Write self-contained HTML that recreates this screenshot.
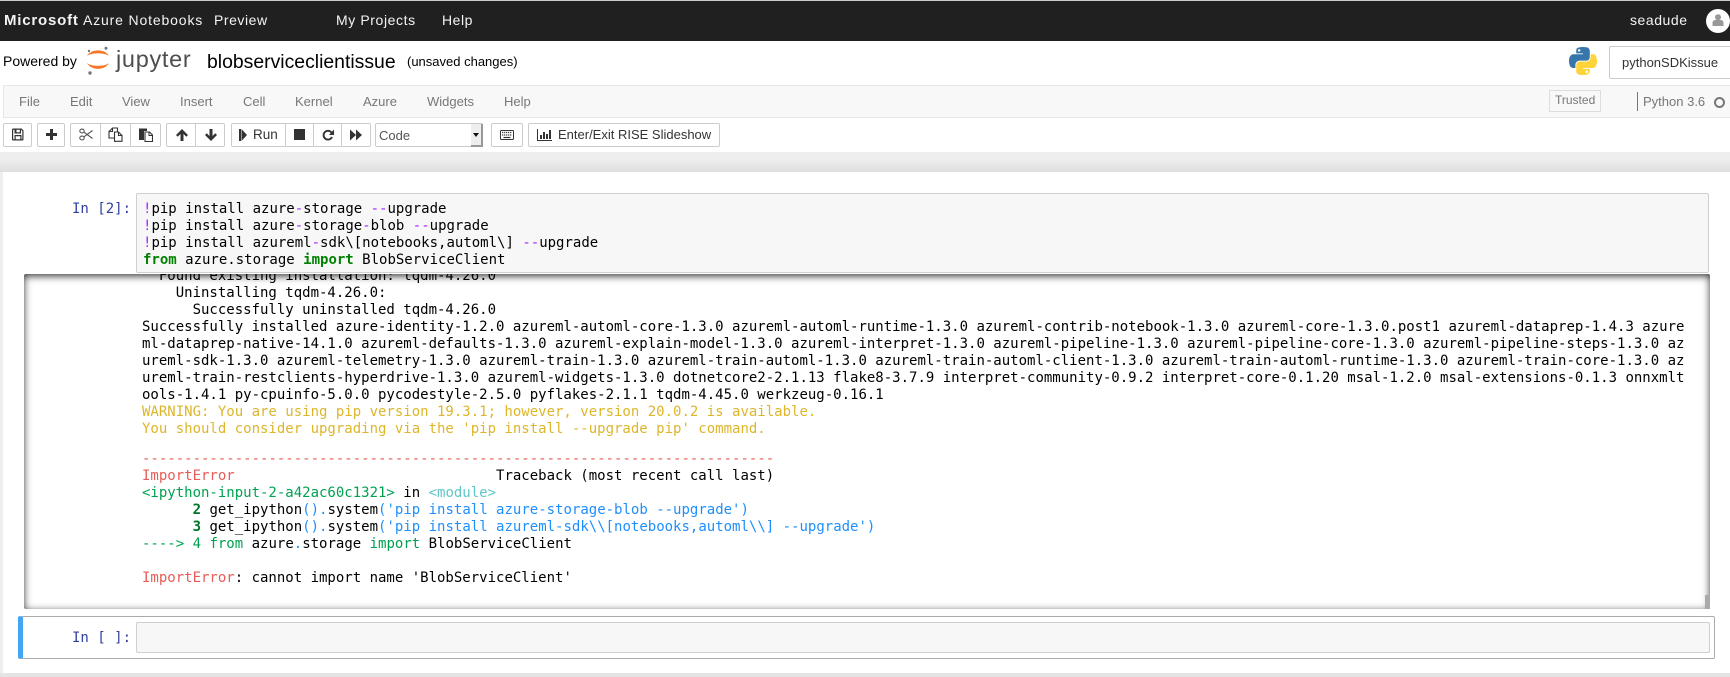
<!DOCTYPE html>
<html><head><meta charset="utf-8"><title>blobserviceclientissue</title>
<style>
html,body{margin:0;padding:0;width:1730px;height:677px;overflow:hidden;background:#fff}
body{position:relative;font-family:"Liberation Sans",sans-serif;color:#000}
.a,.t,.b,svg{position:absolute}
.t{white-space:pre;line-height:17px}
.top{color:#f4f4f4;font-size:14px;letter-spacing:.55px;top:12px}
.m{font-size:13px;color:#777;top:93px}
.b{top:123px;height:22px;background:#fff;border:1px solid #ccc;border-radius:2px;box-sizing:content-box}
.s{position:absolute;top:123px;height:24px;width:1px;background:#ccc}
.i{fill:#333}
pre{margin:0;position:absolute;font-family:"DejaVu Sans Mono","Liberation Mono",monospace;font-size:14px;line-height:17px;color:#000}
.p{color:#a2f}.k{color:green;font-weight:bold}
.y{color:#ddb62b}.r{color:#e75c58}.g{color:#00a250}.c{color:#60c6c8}.bl{color:#208ffb}.d{color:#007427;font-weight:bold}
</style></head><body>

<!-- top bar -->
<div class="a" style="left:0;top:0;width:1730px;height:1px;background:#ccc"></div>
<div class="a" style="left:0;top:1px;width:1730px;height:40px;background:#202020"></div>
<div class="t top" style="left:4px;font-size:15px;letter-spacing:.8px;font-weight:bold">Microsoft</div>
<div class="t top" style="left:83px;letter-spacing:.85px">Azure Notebooks</div>
<div class="t top" style="left:214px">Preview</div>
<div class="t top" style="left:336px;letter-spacing:.6px">My Projects</div>
<div class="t top" style="left:442px">Help</div>
<div class="t top" style="left:1630px">seadude</div>
<div class="a" style="left:1706px;top:9px;width:24px;height:24px;border-radius:12px;background:#fff"></div>
<svg style="left:1712px;top:14px" width="12" height="12" viewBox="0 0 12 12"><circle cx="6" cy="3.200" r="3" fill="#999"/><path d="M.5 12V9c0-2 1.300-3 3-3h5c1.700 0 3 1 3 3v3z" fill="#999"/></svg>

<!-- header -->
<div class="t" style="left:3px;top:53px;font-size:14px">Powered by</div>
<svg style="left:85px;top:45px" width="26" height="32" viewBox="0 0 26 32">
<path d="M2 11C6 3.500 20 3.500 24 11C20 7.500 6 7.500 2 11z" fill="#f37726"/>
<path d="M2 18C6 25.800 20 25.800 24 18C20 21.800 6 21.800 2 18z" fill="#f37726"/>
<circle cx="21" cy="3.300" r="1.500" fill="#767677"/><circle cx="4" cy="6" r="1.200" fill="#767677"/><circle cx="5" cy="28" r="1.700" fill="#767677"/></svg>
<div class="t" style="left:116px;top:46px;font-size:23.500px;line-height:27px;color:#4e4e4e;letter-spacing:.7px">jupyter</div>
<div class="t" style="left:207px;top:50px;font-size:19.400px;line-height:24px">blobserviceclientissue</div>
<div class="t" style="left:407px;top:53px;font-size:13px">(unsaved changes)</div>
<svg style="left:1569px;top:47px" width="28" height="28" viewBox="0 0 111 111">
<path fill="#3776ab" d="M54.919.001c-4.584.022-8.961.413-12.813 1.095C30.760 3.099 28.700 7.295 28.700 15.032v10.219h26.813v3.406H18.638c-7.793 0-14.616 4.684-16.750 13.594-2.462 10.213-2.571 16.586 0 27.250 1.906 7.938 6.457 13.594 14.250 13.594h9.219v-12.250c0-8.850 7.657-16.656 16.750-16.656h26.781c7.454 0 13.406-6.138 13.406-13.625V15.032c0-7.266-6.130-12.725-13.406-13.937C64.282.328 59.502-.020 54.919.001zM40.419 8.219c2.770 0 5.031 2.299 5.031 5.125 0 2.816-2.262 5.094-5.031 5.094-2.780 0-5.031-2.277-5.031-5.094 0-2.826 2.252-5.125 5.031-5.125z"/>
<path fill="#ffd43b" d="M85.638 28.657v11.906c0 9.231-7.826 17-16.750 17H42.106c-7.336 0-13.406 6.278-13.406 13.625v25.531c0 7.266 6.319 11.540 13.406 13.625 8.487 2.496 16.626 2.947 26.781 0 6.750-1.954 13.406-5.888 13.406-13.625V86.501H55.513v-3.406h40.188c7.793 0 10.696-5.436 13.406-13.594 2.800-8.399 2.680-16.476 0-27.250-1.926-7.757-5.604-13.594-13.406-13.594zM70.575 93.313c2.780 0 5.031 2.277 5.031 5.094 0 2.826-2.252 5.125-5.031 5.125-2.770 0-5.031-2.299-5.031-5.125 0-2.816 2.262-5.094 5.031-5.094z"/></svg>
<div class="a" style="left:1609px;top:46px;width:140px;height:31px;border:1px solid #ccc;border-radius:2px"></div>
<div class="t" style="left:1622px;top:54px;font-size:13px;color:#333">pythonSDKissue</div>

<!-- menu -->
<div class="a" style="left:3px;top:85px;width:1727px;height:31px;background:#f8f8f8;border-top:1px solid #e7e7e7;border-bottom:1px solid #e7e7e7;border-left:1px solid #e7e7e7;box-sizing:content-box"></div>
<div class="t m" style="left:19px">File</div>
<div class="t m" style="left:70px">Edit</div>
<div class="t m" style="left:122px">View</div>
<div class="t m" style="left:180px">Insert</div>
<div class="t m" style="left:243px">Cell</div>
<div class="t m" style="left:295px">Kernel</div>
<div class="t m" style="left:363px">Azure</div>
<div class="t m" style="left:427px">Widgets</div>
<div class="t m" style="left:504px">Help</div>
<div class="a" style="left:1549px;top:90px;width:50px;height:20px;border:1px solid #ddd"></div>
<div class="t" style="left:1555px;top:92px;font-size:12px;color:#777">Trusted</div>
<div class="a" style="left:1637px;top:92px;width:1px;height:19px;background:#777"></div>
<div class="t" style="left:1643px;top:93px;font-size:13px;color:#777">Python 3.6</div>
<div class="a" style="left:1714px;top:97px;width:7px;height:7px;border:2px solid #777;border-radius:50%"></div>

<!-- toolbar -->
<div class="b" style="left:3px;width:27px"></div>
<div class="b" style="left:37px;width:26px"></div>
<div class="b" style="left:70px;width:89px"></div><div class="s" style="left:100px"></div><div class="s" style="left:130px"></div>
<div class="b" style="left:166px;width:57px"></div><div class="s" style="left:195px"></div>
<div class="b" style="left:231px;width:138px"></div><div class="s" style="left:285px"></div><div class="s" style="left:313px"></div><div class="s" style="left:341px"></div>
<div class="b" style="left:375px;width:106px"></div>
<div class="a" style="left:471px;top:124px;width:10px;height:21px;background:#eee;border-right:2px solid #999;border-bottom:2px solid #999"></div>
<svg style="left:472px;top:132px" width="9" height="6"><path d="M1 1h6L4 5z" fill="#111"/></svg>
<div class="t" style="left:379px;top:127px;font-size:13px;color:#555">Code</div>
<div class="b" style="left:491px;width:30px"></div>
<div class="b" style="left:528px;width:190px"></div>

<!-- save -->
<svg style="left:12px;top:128px" width="12" height="13" viewBox="0 0 12 13"><path class="i" fill-rule="evenodd" d="M1 .5h8.500L11.500 2.500V11.500a1 1 0 0 1-1 1H1a1 1 0 0 1-1-1V1.500a1 1 0 0 1 1-1zM1.200 1.700V11.300H2.500V7h7v4.300h.800V3L9 1.700V5.500H2.500V1.700zM3.700 8.200V11.300H8.300V8.200zM4.500 1.700V4.300H7.800V1.700z"/></svg>
<!-- plus -->
<svg style="left:46px;top:129px" width="11" height="11" viewBox="0 0 11 11"><path class="i" d="M4 0h3v4h4v3H7v4H4V7H0V4h4z"/></svg>
<!-- scissors -->
<svg style="left:79px;top:128px" width="14" height="13" viewBox="0 0 14 13"><g fill="none" stroke="#555" stroke-width="1.100"><ellipse cx="3" cy="3" rx="2.200" ry="1.900"/><ellipse cx="3" cy="10" rx="2.200" ry="1.900"/><path d="M5 4.200L13.500 10.500M5 8.800L13.500 2.500"/></g></svg>
<!-- copy -->
<svg style="left:108px;top:127px" width="15" height="15" viewBox="0 0 15 15"><g fill="#fff" stroke="#333" stroke-width="1.100"><path d="M1 4.500L4.500 1H9.500V11H1z"/><path d="M6.500 5H10.500L14 8.500V14.300H6.500z"/><path d="M4.500 1V4.500H1M10.500 5V8.500H14" fill="none"/></g></svg>
<!-- paste -->
<svg style="left:139px;top:127px" width="14" height="15" viewBox="0 0 14 15"><path class="i" d="M0 1.500h8V4H5v9H0z"/><path d="M6 5h4.500L13.500 8v6.500H6z" fill="#fff" stroke="#333" stroke-width="1.100"/><path d="M10 5v3.500h3.500" fill="none" stroke="#333"/></svg>
<!-- up -->
<svg style="left:176px;top:129px" width="12" height="12" viewBox="0 0 12 12"><path class="i" d="M6 0L12 6 10.300 7.700 7.500 5v7h-3V5L1.700 7.700 0 6z"/></svg>
<!-- down -->
<svg style="left:205px;top:129px" width="12" height="12" viewBox="0 0 12 12"><path class="i" d="M6 12L0 6 1.700 4.300 4.500 7V0h3v7l2.800-2.700L12 6z"/></svg>
<!-- step forward -->
<svg style="left:239px;top:129px" width="8" height="12" viewBox="0 0 8 12"><path class="i" d="M0 0h2v12H0zM2.500 0L8 6l-5.500 6z"/></svg>
<div class="t" style="left:253px;top:126px;font-size:13.500px;color:#333">Run</div>
<!-- stop -->
<svg style="left:294px;top:129px" width="11" height="11"><rect width="11" height="11" fill="#333"/></svg>
<!-- repeat -->
<svg style="left:322px;top:129px" width="12" height="12" viewBox="0 0 12 12"><path d="M9.500 3.500A4.400 4.400 0 1 0 10 8" fill="none" stroke="#333" stroke-width="1.900"/><path class="i" d="M12 .5V6H7z"/></svg>
<!-- fast forward -->
<svg style="left:350px;top:129px" width="12" height="12" viewBox="0 0 12 12"><path class="i" d="M0 .5L6 6 0 11.500zM6 .5L12 6l-6 5.500z"/></svg>
<!-- keyboard -->
<svg style="left:500px;top:130px" width="14" height="10" viewBox="0 0 14 10"><rect x=".5" y=".5" width="13" height="9" rx="1" fill="#fff" stroke="#333"/><path d="M2 2.500h10M2 5h10" stroke="#444" stroke-width="1.300" stroke-dasharray="1.300 .7"/><path d="M3.500 7.500h7" stroke="#333" stroke-width="1.200"/></svg>
<!-- chart -->
<svg style="left:537px;top:129px" width="15" height="12" viewBox="0 0 15 12"><path class="i" d="M0 0h1v11h14v1H0zM3 6h2v4H3zM6 3h2v7H6zM9 5h2v5H9zM12 1h2v9h-2z"/></svg>
<div class="t" style="left:558px;top:126px;font-size:13px;color:#333">Enter/Exit RISE Slideshow</div>

<!-- band + notebook -->
<div class="a" style="left:0;top:152px;width:1730px;height:20px;background:linear-gradient(#eee 40%,#dedede)"></div>
<div class="a" style="left:0;top:172px;width:3px;height:505px;background:#eee"></div>
<div class="a" style="left:0;top:673px;width:1730px;height:4px;background:#e4e4e4"></div>

<pre style="left:72px;top:201px;color:#303f9f">In [2]:</pre>
<div class="a" style="left:136px;top:193px;width:1573px;height:80px;box-sizing:border-box;background:#f7f7f7;border:1px solid #cfcfcf;border-radius:2px"></div>
<pre style="left:143px;top:201px"><span class="p">!</span>pip install azure<span class="p">-</span>storage <span class="p">--</span>upgrade
<span class="p">!</span>pip install azure<span class="p">-</span>storage<span class="p">-</span>blob <span class="p">--</span>upgrade
<span class="p">!</span>pip install azureml<span class="p">-</span>sdk\[notebooks,automl\] <span class="p">--</span>upgrade
<span class="k">from</span> azure.storage <span class="k">import</span> BlobServiceClient</pre>

<!-- output -->
<div class="a" style="left:24px;top:274px;width:1686px;height:335px;overflow:hidden;background:#fff">
<pre style="left:118px;top:-6px">  Found existing installation: tqdm-4.26.0
    Uninstalling tqdm-4.26.0:
      Successfully uninstalled tqdm-4.26.0
Successfully installed azure-identity-1.2.0 azureml-automl-core-1.3.0 azureml-automl-runtime-1.3.0 azureml-contrib-notebook-1.3.0 azureml-core-1.3.0.post1 azureml-dataprep-1.4.3 azure
ml-dataprep-native-14.1.0 azureml-defaults-1.3.0 azureml-explain-model-1.3.0 azureml-interpret-1.3.0 azureml-pipeline-1.3.0 azureml-pipeline-core-1.3.0 azureml-pipeline-steps-1.3.0 az
ureml-sdk-1.3.0 azureml-telemetry-1.3.0 azureml-train-1.3.0 azureml-train-automl-1.3.0 azureml-train-automl-client-1.3.0 azureml-train-automl-runtime-1.3.0 azureml-train-core-1.3.0 az
ureml-train-restclients-hyperdrive-1.3.0 azureml-widgets-1.3.0 dotnetcore2-2.1.13 flake8-3.7.9 interpret-community-0.9.2 interpret-core-0.1.20 msal-1.2.0 msal-extensions-0.1.3 onnxmlt
ools-1.4.1 py-cpuinfo-5.0.0 pycodestyle-2.5.0 pyflakes-2.1.1 tqdm-4.45.0 werkzeug-0.16.1
<span class="y">WARNING: You are using pip version 19.3.1; however, version 20.0.2 is available.
You should consider upgrading via the 'pip install --upgrade pip' command.</span></pre>
<pre style="left:118px;top:177px"><span class="r">---------------------------------------------------------------------------</span>
<span class="r">ImportError</span>                               Traceback (most recent call last)
<span class="g">&lt;ipython-input-2-a42ac60c1321&gt;</span> in <span class="c">&lt;module&gt;</span>
      <span class="d">2</span> get_ipython<span class="bl">()</span><span class="bl">.</span>system<span class="bl">('pip install azure-storage-blob --upgrade')</span>
      <span class="d">3</span> get_ipython<span class="bl">()</span><span class="bl">.</span>system<span class="bl">('pip install azureml-sdk\\[notebooks,automl\\] --upgrade')</span>
<span class="g">----&gt; 4</span> <span class="g">from</span> azure<span class="bl">.</span>storage <span class="g">import</span> BlobServiceClient

<span class="r">ImportError</span>: cannot import name 'BlobServiceClient'</pre>
<div class="a" style="left:0;top:0;width:1686px;height:335px;box-sizing:border-box;border-radius:2px;box-shadow:inset 0 2px 8px rgba(0,0,0,.8)"></div>
<div class="a" style="left:1681px;top:321px;width:5px;height:14px;background:#aaa"></div>
</div>

<!-- second cell -->
<div class="a" style="left:18px;top:616px;width:1697px;height:43px;box-sizing:border-box;border:1px solid #ababab;border-left:5px solid #42a5f5;border-radius:2px"></div>
<pre style="left:72px;top:630px;color:#303f9f">In [ ]:</pre>
<div class="a" style="left:136px;top:622px;width:1574px;height:31px;box-sizing:border-box;background:#f7f7f7;border:1px solid #cfcfcf;border-radius:2px"></div>
</body></html>
